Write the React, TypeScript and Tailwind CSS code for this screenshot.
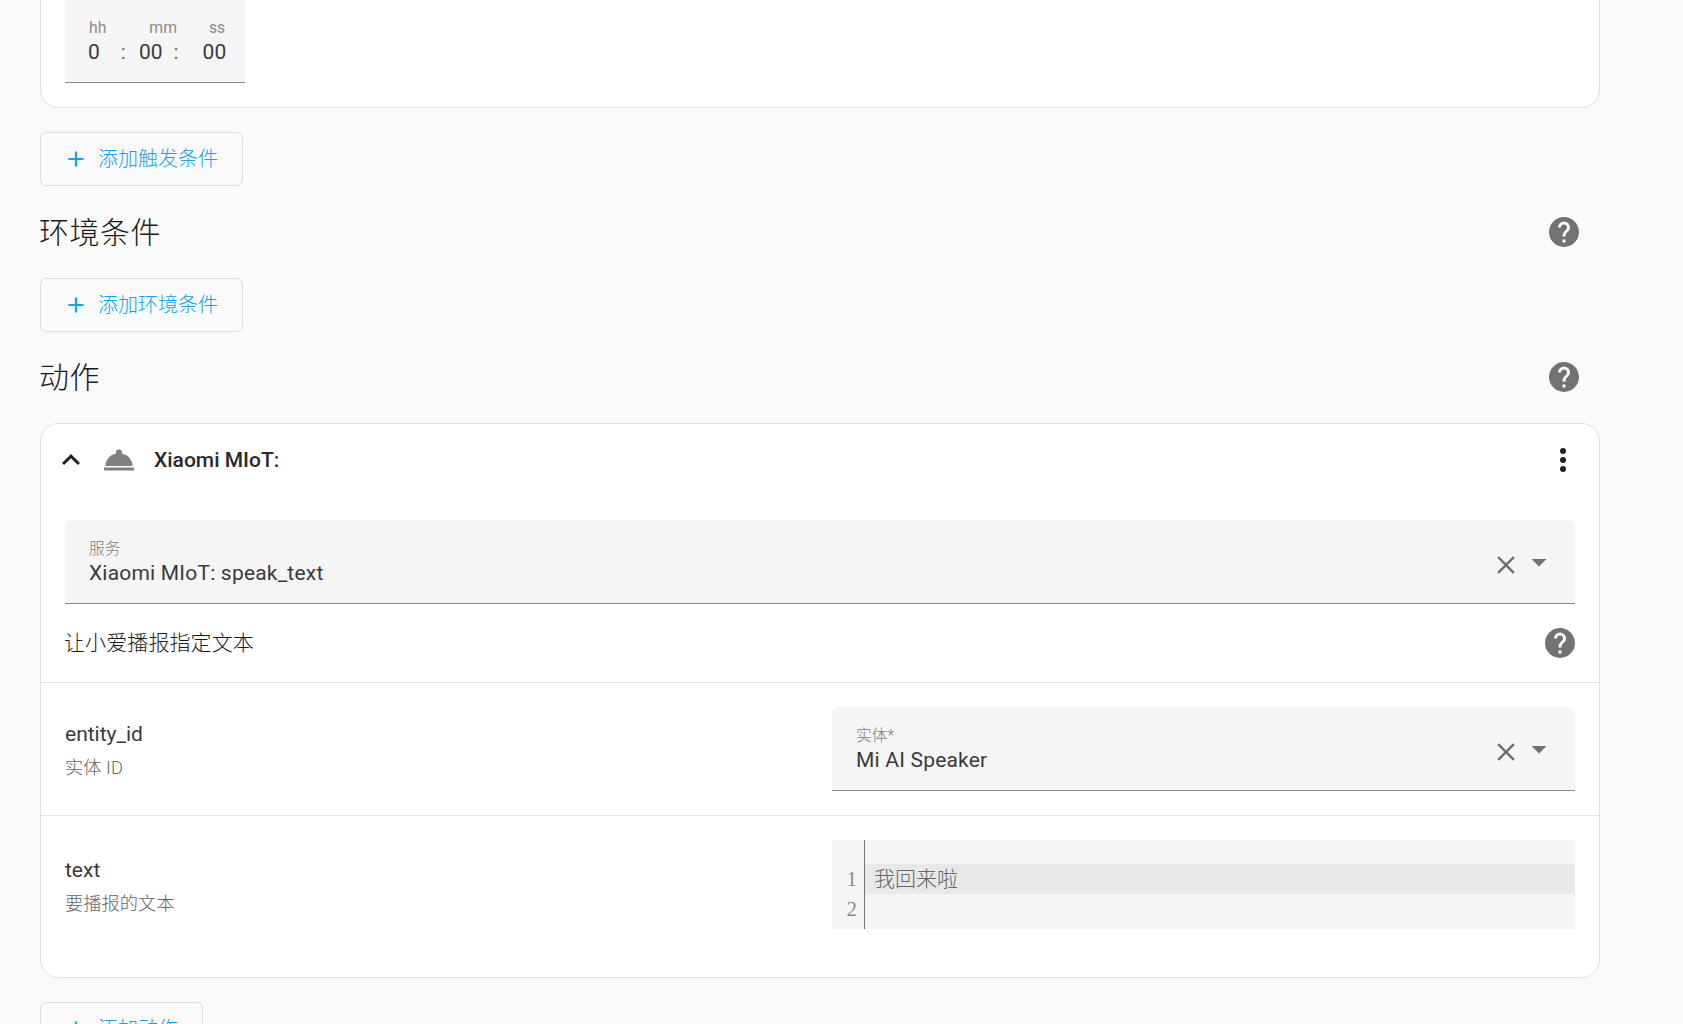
import React from "react";

const FONT = "font-['Roboto','Noto_Sans_CJK_SC',sans-serif]";

const mdi = {
  help: "M15.07,11.25L14.17,12.17C13.45,12.89 13,13.5 13,15H11V14.5C11,13.39 11.45,12.39 12.17,11.67L13.41,10.41C13.78,10.05 14,9.55 14,9C14,7.89 13.1,7 12,7A2,2 0 0,0 10,9H8A4,4 0 0,1 12,5A4,4 0 0,1 16,9C16,9.88 15.64,10.67 15.07,11.25M13,19H11V17H13M12,2A10,10 0 0,0 2,12A10,10 0 0,0 12,22A10,10 0 0,0 22,12C22,6.47 17.5,2 12,2Z",
  plus: "M19,13H13V19H11V13H5V11H11V5H13V11H19V13Z",
  close: "M19,6.41L17.59,5L12,10.59L6.41,5L5,6.41L10.59,12L5,17.59L6.41,19L12,13.41L17.59,19L19,17.59L13.41,12L19,6.41Z",
  menuDown: "M7,10L12,15L17,10H7Z",
  chevronUp: "M7.41,15.41L12,10.83L16.59,15.41L18,14L12,8L6,14L7.41,15.41Z",
  dots: "M12,16A2,2 0 0,1 14,18A2,2 0 0,1 12,20A2,2 0 0,1 10,18A2,2 0 0,1 12,16M12,10A2,2 0 0,1 14,12A2,2 0 0,1 12,14A2,2 0 0,1 10,12A2,2 0 0,1 12,10M12,4A2,2 0 0,1 14,6A2,2 0 0,1 12,8A2,2 0 0,1 10,6A2,2 0 0,1 12,4Z",
  bell: "M12,5A2,2 0 0,1 14,7C14,7.24 13.96,7.47 13.88,7.69C17.95,8.5 21,11.91 21,16H3C3,11.91 6.05,8.5 10.12,7.69C10.04,7.47 10,7.24 10,7A2,2 0 0,1 12,5M22,19H2V17H22V19Z",
};

function Icon({ d, className }: { d: string; className: string }) {
  return (
    <svg viewBox="0 0 24 24" className={`shrink-0 fill-current ${className}`}>
      <path d={d} />
    </svg>
  );
}

function AddButton({ label, className = "" }: { label: string; className?: string }) {
  return (
    <button className={`flex h-[54px] items-center rounded-[6px] border border-[#dcdcdc] pl-[22px] text-[#0ea5e9] ${className}`}>
      <Icon d={mdi.plus} className="h-[26px] w-[26px]" />
      <span className="ml-[9px] text-[20px] font-light">{label}</span>
    </button>
  );
}

function SectionHeading({ title }: { title: string }) {
  return (
    <div className="flex h-[46px] items-center justify-between pr-[18px]">
      <h2 className="-ml-[1px] text-[30px] font-light tracking-[0.5px] text-[#1a1a1a]">{title}</h2>
      <Icon d={mdi.help} className="h-[36px] w-[36px] text-[#727272]" />
    </div>
  );
}

function SelectField({ label, value, className = "" }: { label: string; value: string; className?: string }) {
  return (
    <div className={`flex h-[84px] items-center rounded-t-[6px] border-b border-[#8c8c8c] bg-[#f5f5f5] pl-[24px] pr-[18px] ${className}`}>
      <div className="min-w-0 flex-1 pt-[2px]">
        <div className="text-[15.75px] leading-[20px] font-light text-[#808080]">{label}</div>
        <div className="text-[21px] leading-[28px] tracking-[0.2px] text-[#3a3a3a]">{value}</div>
      </div>
      <Icon d={mdi.close} className="mt-[6px] h-[30px] w-[30px] text-[#727272]" />
      <Icon d={mdi.menuDown} className="h-[36px] w-[36px] text-[#727272]" />
    </div>
  );
}

function ParamLabel({ name, hint, className = "" }: { name: string; hint: string; className?: string }) {
  return (
    <div className={`w-[767px] shrink-0 ${className}`}>
      <div className="text-[21px] leading-[28px] text-[#3a3a3a]">{name}</div>
      <div className="mt-[7px] text-[18.3px] leading-[26px] font-light text-[#666666]">{hint}</div>
    </div>
  );
}

export default function App() {
  return (
    <div className={`h-[1024px] overflow-hidden bg-[#fafafa] pl-[40px] ${FONT}`}>
      <div className="w-[1560px]">
        {/* trigger card, top part is scrolled out of view */}
        <div className="h-[108px] rounded-b-[18px] border-x border-b border-[#e0e0e0] bg-white px-[24px]">
          <div className="h-[83px] w-[180px] border-b border-[#8c8c8c] bg-[#f5f5f5]">
            <div className="flex pt-[18px] text-[15.75px] leading-[20px] text-[#8a8a8a]">
              <span className="ml-[24px]">hh</span>
              <span className="ml-[43px]">mm</span>
              <span className="ml-[32px]">ss</span>
            </div>
            <div className="flex text-[21px] leading-[28px] text-[#3a3a3a]">
              <span className="ml-[23px]">0</span>
              <span className="ml-[21px] text-[#727272]">:</span>
              <span className="ml-[13px]">00</span>
              <span className="ml-[11px] text-[#727272]">:</span>
              <span className="ml-[24px]">00</span>
            </div>
          </div>
        </div>

        <AddButton label="添加触发条件" className="mt-[24px] w-[203px]" />

        <div className="mt-[23px]">
          <SectionHeading title="环境条件" />
        </div>

        <AddButton label="添加环境条件" className="mt-[23px] w-[203px]" />

        <div className="mt-[22px]">
          <SectionHeading title="动作" />
        </div>

        {/* action card */}
        <div className="mt-[23px] h-[555px] rounded-[18px] border border-[#e0e0e0] bg-white">
          <div className="flex h-[72px] items-center pl-[12px] pr-[18px]">
            <Icon d={mdi.chevronUp} className="h-[36px] w-[36px] text-[#212121]" />
            <Icon d={mdi.bell} className="ml-[12px] h-[36px] w-[36px] text-[#808080]" />
            <div className="ml-[17px] flex-1 pt-[2px] text-[21px] font-medium text-[#2a2a2a]">Xiaomi MIoT:</div>
            <Icon d={mdi.dots} className="h-[36px] w-[36px] text-[#212121]" />
          </div>

          <div className="px-[24px] pt-[24px]">
            <SelectField label="服务" value="Xiaomi MIoT: speak_text" />
          </div>

          <div className="flex h-[79px] items-center justify-between border-b border-[#e0e0e0] pl-[24px] pr-[24px]">
            <div className="-ml-[1px] pt-[2px] text-[21px] font-light tracking-[0.1px] text-[#1a1a1a]">让小爱播报指定文本</div>
            <Icon d={mdi.help} className="-mr-[3px] h-[36px] w-[36px] text-[#727272]" />
          </div>

          <div className="flex h-[133px] items-center border-b border-[#e0e0e0] px-[24px]">
            <ParamLabel name="entity_id" hint="实体 ID" className="pt-[3px]" />
            <SelectField label="实体*" value="Mi AI Speaker" className="flex-1" />
          </div>

          <div className="flex items-start px-[24px] pt-[24px]">
            <div className="pt-[16px]">
              <ParamLabel name="text" hint="要播报的文本" />
            </div>
            <div className="flex h-[89px] flex-1 overflow-hidden rounded-t-[4px] bg-[#f5f5f5] font-['Liberation_Serif','Noto_Sans_CJK_SC',serif] text-[21px] leading-[30px] text-[#666666]">
              <div className="h-full w-[33px] border-r border-[#727272] pr-[7px] pt-[24px] text-right text-[#8a8a8a]">
                <div>1</div>
                <div>2</div>
              </div>
              <div className="flex-1 pt-[24px]">
                <div className="bg-[#e8e8e8] pl-[9px] font-light">我回来啦</div>
              </div>
            </div>
          </div>
        </div>

        <AddButton label="添加动作" className="mt-[24px] w-[163px]" />
      </div>
    </div>
  );
}
